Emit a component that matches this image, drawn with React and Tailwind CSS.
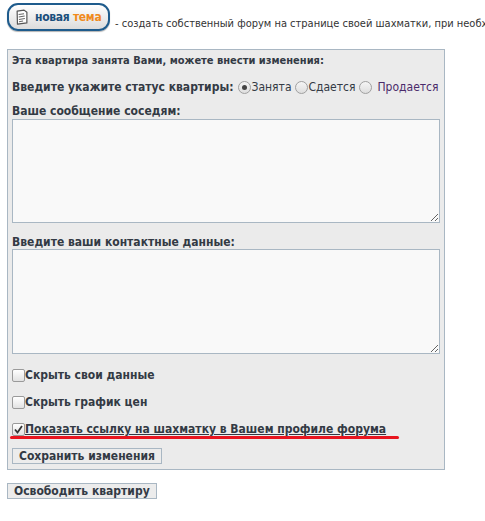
import React from 'react';

const font = { fontFamily: '"DejaVu Sans Condensed", "DejaVu Sans", sans-serif' };

function NewTopicButton() {
  return (
    <div className="flex items-center shrink-0 h-[28px] w-[103px] rounded-[11px] border-2 border-[#1e5b8c] bg-gradient-to-b from-white to-[#dcdcdc] pl-[6px] gap-[6px] shadow-[0_1px_1px_rgba(0,0,0,0.3)]">
      <svg width="14" height="16" viewBox="0 0 14 16">
        <path d="M3 1.5 L10 1.5 L12.5 4 L11 14.5 L1.5 14.5 Z" fill="#fff" stroke="#555" strokeWidth="1.2" strokeLinejoin="round" transform="rotate(-8 7 8)" />
        <g stroke="#666" strokeWidth="1" transform="rotate(-8 7 8)">
          <line x1="4" y1="5" x2="9.5" y2="5" />
          <line x1="3.8" y1="7.5" x2="9.8" y2="7.5" />
          <line x1="3.6" y1="10" x2="9.6" y2="10" />
          <line x1="3.4" y1="12.2" x2="7.5" y2="12.2" />
        </g>
      </svg>
      <span className="text-[12px] font-bold leading-none whitespace-nowrap tracking-[-0.3px]">
        <span className="text-[#1b4f7c]">новая </span>
        <span className="text-[#f08a1c]">тема</span>
      </span>
    </div>
  );
}

function Check({ checked, label, underline }) {
  return (
    <label className="flex items-center h-[16px]">
      <span className="w-[13px] h-[13px] rounded-[2px] border border-[#9a9a9a] bg-gradient-to-b from-white to-[#e2e2e2] flex items-center justify-center">
        {checked && (
          <svg width="9" height="9" viewBox="0 0 9 9">
            <path d="M1 4.5 L3.5 7.5 L8 1" fill="none" stroke="#333" strokeWidth="1.8" />
          </svg>
        )}
      </span>
      <span className={`text-[12px] font-bold text-[#333a44] ${underline ? 'underline' : ''}`}>{label}</span>
    </label>
  );
}

function Radio({ checked }) {
  return (
    <span className="w-[13px] h-[13px] rounded-full border border-[#a0a0a0] bg-gradient-to-b from-[#f5f5f5] to-[#dedede] flex items-center justify-center">
      {checked && <span className="w-[5px] h-[5px] rounded-full bg-[#444]" />}
    </span>
  );
}

export default function App() {
  return (
    <div className="w-[485px] h-[521px] bg-white overflow-hidden text-[#333a44]" style={font}>
      <div className="flex items-end pl-[7px] pt-[3px] h-[31px]">
        <NewTopicButton />
        <span className="ml-[5px] mb-[-1px] text-[11px] whitespace-nowrap text-[#333]">
          - создать собственный форум на странице своей шахматки, при необходимости
        </span>
      </div>

      <div className="relative mt-[18px] ml-[7px] w-[438px] h-[421px] border border-[#a9b7c3] bg-[#ebebeb] px-[4px]">
        <div className="mt-[4px] text-[11px] font-bold leading-[14px]">
          Эта квартира занята Вами, можете внести изменения:
        </div>
        <div className="mt-[10px] flex items-center h-[18px] text-[12px] whitespace-nowrap">
          <span className="font-bold">Введите укажите статус квартиры:</span>
          <span className="ml-[4px] flex items-center gap-[1px]"><Radio checked />Занята</span>
          <span className="ml-[3px] flex items-center gap-[1px]"><Radio />Сдается</span>
          <span className="ml-[4px] flex items-center gap-[5px] text-[#4a2a6a]"><Radio />Продается</span>
        </div>
        <div className="mt-[8px] text-[12px] font-bold leading-[15px]">Ваше сообщение соседям:</div>
        <textarea className="block w-[428px] h-[104px] border border-[#a9b7c3] bg-[#f9f9f9] outline-none" />
        <div className="mt-[12px] text-[12px] font-bold leading-[14px]">Введите ваши контактные данные:</div>
        <textarea className="block w-[428px] h-[105px] border border-[#a9b7c3] bg-[#f9f9f9] outline-none" />
        <div className="mt-[13px] flex flex-col gap-[11px]">
          <Check label="Скрыть свои данные" />
          <Check label="Скрыть график цен" />
          <Check checked underline label="Показать ссылку на шахматку в Вашем профиле форума" />
        </div>
        <button className="mt-[11px] h-[16px] px-[6px] border border-[#a9b7c3] bg-[#ececec] text-[12px] font-bold leading-none text-[#333a44]">
          Сохранить изменения
        </button>
        <div className="absolute left-[2px] top-[386px] w-[389px] h-[3px] rounded-full bg-[#e8151f]" />
      </div>

      <button className="mt-[13px] ml-[7px] h-[16px] px-[6px] border border-[#a9b7c3] bg-[#ececec] text-[12px] font-bold leading-none text-[#333a44]" style={font}>
        Освободить квартиру
      </button>
    </div>
  );
}
